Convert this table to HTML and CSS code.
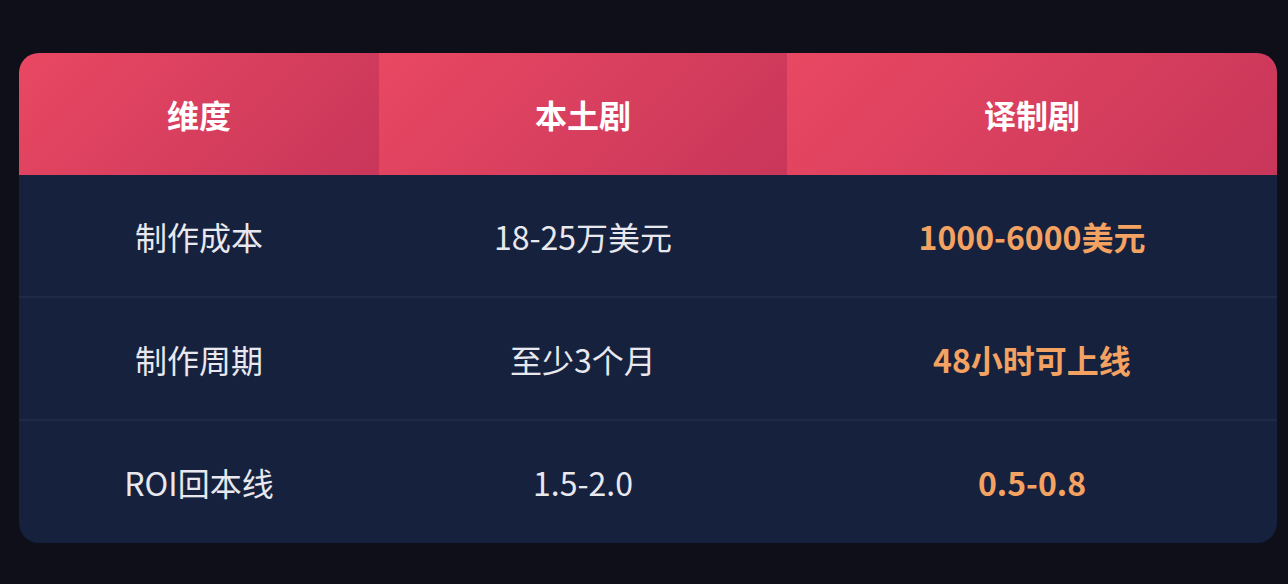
FILE: index.html
```html
<!DOCTYPE html>
<html lang="zh">
<head>
<meta charset="utf-8">
<link rel="stylesheet" href="styles.css">
</head>
<body>
<div class="wrap">
  <table class="cmp">
    <colgroup>
      <col class="c1"><col class="c2"><col class="c3">
    </colgroup>
    <thead>
      <tr><th>维度</th><th>本土剧</th><th>译制剧</th></tr>
    </thead>
    <tbody>
      <tr><td>制作成本</td><td>18-25万美元</td><td class="hl">1000-6000美元</td></tr>
      <tr><td>制作周期</td><td>至少3个月</td><td class="hl">48小时可上线</td></tr>
      <tr><td>ROI回本线</td><td>1.5-2.0</td><td class="hl">0.5-0.8</td></tr>
    </tbody>
  </table>
</div>
</body>
</html>
```
FILE: styles.css
```css
html, body {
  margin: 0;
  padding: 0;
  background: #0f0f19;
}
body {
  font-family: "Noto Sans CJK SC", "Noto Sans", sans-serif;
}
.wrap {
  padding: 53px 11px 40px 19px;
}
.cmp {
  width: 1258px;
  border-collapse: separate;
  border-spacing: 0;
  border-radius: 20px;
  overflow: hidden;
  background: #16213e;
  table-layout: fixed;
}
.c1 { width: 360px; }
.c2 { width: 408px; }
.c3 { width: 490px; }
.cmp th {
  height: 122px;
  padding: 0;
  background: linear-gradient(135deg, #e94862 0%, #c8365a 100%);
  color: #ffffff;
  font-size: 32px;
  font-weight: 700;
  text-align: center;
  vertical-align: middle;
}
.cmp td {
  height: 121px;
  padding: 0;
  color: #e8e8ee;
  font-size: 32px;
  font-weight: 400;
  text-align: center;
  vertical-align: middle;
  border-bottom: 2px solid #1f2a47;
}
.cmp tbody tr:last-child td {
  border-bottom: none;
  height: 122px;
}
.cmp td.hl {
  color: #f4a261;
  font-weight: 700;
}
```
